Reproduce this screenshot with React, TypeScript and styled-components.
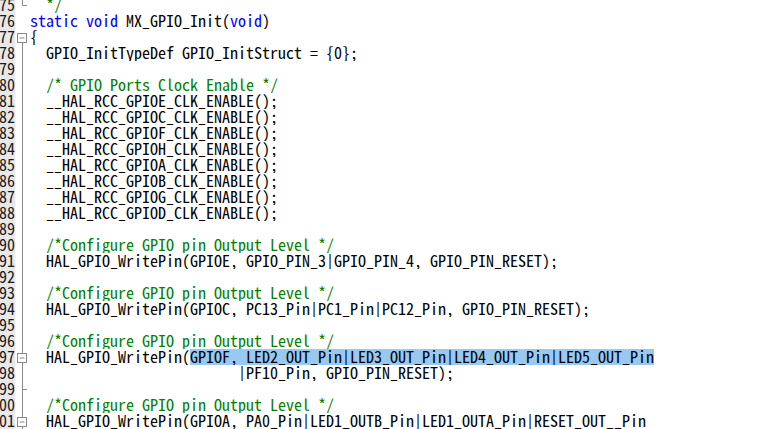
import React from "react";
import styled, { createGlobalStyle } from "styled-components";

const Global = createGlobalStyle`
  html, body { margin: 0; padding: 0; background: #ffffff; overflow: hidden; }
  body { width: 770px; height: 429px; }
`;

type Kind = "p" | "kw" | "cm" | "sel";
type Fold = "none" | "tail" | "start" | "line" | "box" | "midtail";
type Line = { n: number; fold: Fold; segs: [string, Kind][] };

const lines: Line[] = [
  { n: 75, fold: "tail", segs: [["  */", "cm"]] },
  {
    n: 76,
    fold: "none",
    segs: [
      ["static", "kw"],
      [" ", "p"],
      ["void", "kw"],
      [" MX_GPIO_Init(", "p"],
      ["void", "kw"],
      [")", "p"],
    ],
  },
  { n: 77, fold: "start", segs: [["{", "p"]] },
  { n: 78, fold: "line", segs: [["  GPIO_InitTypeDef GPIO_InitStruct = {0};", "p"]] },
  { n: 79, fold: "line", segs: [] },
  { n: 80, fold: "line", segs: [["  /* GPIO Ports Clock Enable */", "cm"]] },
  ...["E", "C", "F", "H", "A", "B", "G", "D"].map((p, i) => ({
    n: 81 + i,
    fold: "line" as Fold,
    segs: [[`  __HAL_RCC_GPIO${p}_CLK_ENABLE();`, "p"]] as [string, Kind][],
  })),
  { n: 89, fold: "line", segs: [] },
  { n: 90, fold: "line", segs: [["  /*Configure GPIO pin Output Level */", "cm"]] },
  {
    n: 91,
    fold: "line",
    segs: [["  HAL_GPIO_WritePin(GPIOE, GPIO_PIN_3|GPIO_PIN_4, GPIO_PIN_RESET);", "p"]],
  },
  { n: 92, fold: "line", segs: [] },
  { n: 93, fold: "line", segs: [["  /*Configure GPIO pin Output Level */", "cm"]] },
  {
    n: 94,
    fold: "line",
    segs: [["  HAL_GPIO_WritePin(GPIOC, PC13_Pin|PC1_Pin|PC12_Pin, GPIO_PIN_RESET);", "p"]],
  },
  { n: 95, fold: "line", segs: [] },
  { n: 96, fold: "line", segs: [["  /*Configure GPIO pin Output Level */", "cm"]] },
  {
    n: 97,
    fold: "box",
    segs: [
      ["  HAL_GPIO_WritePin(", "p"],
      ["GPIOF, LED2_OUT_Pin|LED3_OUT_Pin|LED4_OUT_Pin|LED5_OUT_Pin", "sel"],
    ],
  },
  { n: 98, fold: "line", segs: [["                          |PF10_Pin, GPIO_PIN_RESET);", "p"]] },
  { n: 99, fold: "midtail", segs: [] },
  { n: 100, fold: "line", segs: [["  /*Configure GPIO pin Output Level */", "cm"]] },
  {
    n: 101,
    fold: "box",
    segs: [["  HAL_GPIO_WritePin(GPIOA, PA0_Pin|LED1_OUTB_Pin|LED1_OUTA_Pin|RESET_OUT__Pin", "p"]],
  },
];

const Editor = styled.div`
  display: flex;
  flex-direction: column;
  margin-top: -3px;
  font-family: "Noto Sans Mono CJK JP", "MS Gothic", "DejaVu Sans Mono", monospace;
  font-size: 16px;
`;

const Row = styled.div`
  display: grid;
  grid-template-columns: 15px 15px 1fr;
  height: 16px;
  line-height: 14px;
`;

const LineNo = styled.div`
  background: #e8e8e8;
  color: #1a1a1a;
  text-align: right;
  overflow: hidden;
  white-space: nowrap;
  direction: rtl;
  height: 16px;
`;

const FoldCell = styled.div`
  background: #ffffff;
  border-left: 1px solid #f6f6f6;
  box-sizing: border-box;
  height: 16px;
  display: flex;
`;

const Code = styled.div`
  white-space: pre;
  overflow: hidden;
  height: 16px;
`;

const Seg = styled.span<{ $kind: Kind }>`
  display: inline-block;
  vertical-align: top;
  height: 16px;
  color: ${(p) => (p.$kind === "kw" ? "#0000ff" : p.$kind === "cm" ? "#008000" : "#000000")};
  background: ${(p) => (p.$kind === "sel" ? "#99c9f0" : "transparent")};
`;

const G = "#8a8a8a";

function FoldMark({ kind }: { kind: Fold }) {
  return (
    <svg width="15" height="16" viewBox="0 0 15 16" style={{ marginLeft: -1 }}>
      {kind === "tail" && (
        <>
          <line x1="7.5" y1="0" x2="7.5" y2="8.5" stroke={G} />
          <line x1="7.5" y1="8.5" x2="12" y2="8.5" stroke={G} />
        </>
      )}
      {kind === "line" && <line x1="7.5" y1="0" x2="7.5" y2="16" stroke={G} />}
      {kind === "midtail" && (
        <>
          <line x1="7.5" y1="0" x2="7.5" y2="16" stroke={G} />
          <line x1="7.5" y1="8.5" x2="12" y2="8.5" stroke={G} />
        </>
      )}
      {(kind === "start" || kind === "box") && (
        <>
          {kind === "box" && <line x1="7.5" y1="0" x2="7.5" y2="4" stroke={G} />}
          <line x1="7.5" y1="13" x2="7.5" y2="16" stroke={G} />
          <rect x="2.5" y="4.5" width="9" height="9" fill="#ffffff" stroke={G} />
          <line x1="4.5" y1="9" x2="9.5" y2="9" stroke={G} />
        </>
      )}
    </svg>
  );
}

export default function App() {
  return (
    <>
      <Global />
      <Editor>
        {lines.map((l) => (
          <Row key={l.n}>
            <LineNo>{String(l.n)}</LineNo>
            <FoldCell>
              <FoldMark kind={l.fold} />
            </FoldCell>
            <Code>
              {l.segs.map(([t, k], i) => (
                <Seg key={i} $kind={k}>
                  {t}
                </Seg>
              ))}
            </Code>
          </Row>
        ))}
      </Editor>
    </>
  );
}
